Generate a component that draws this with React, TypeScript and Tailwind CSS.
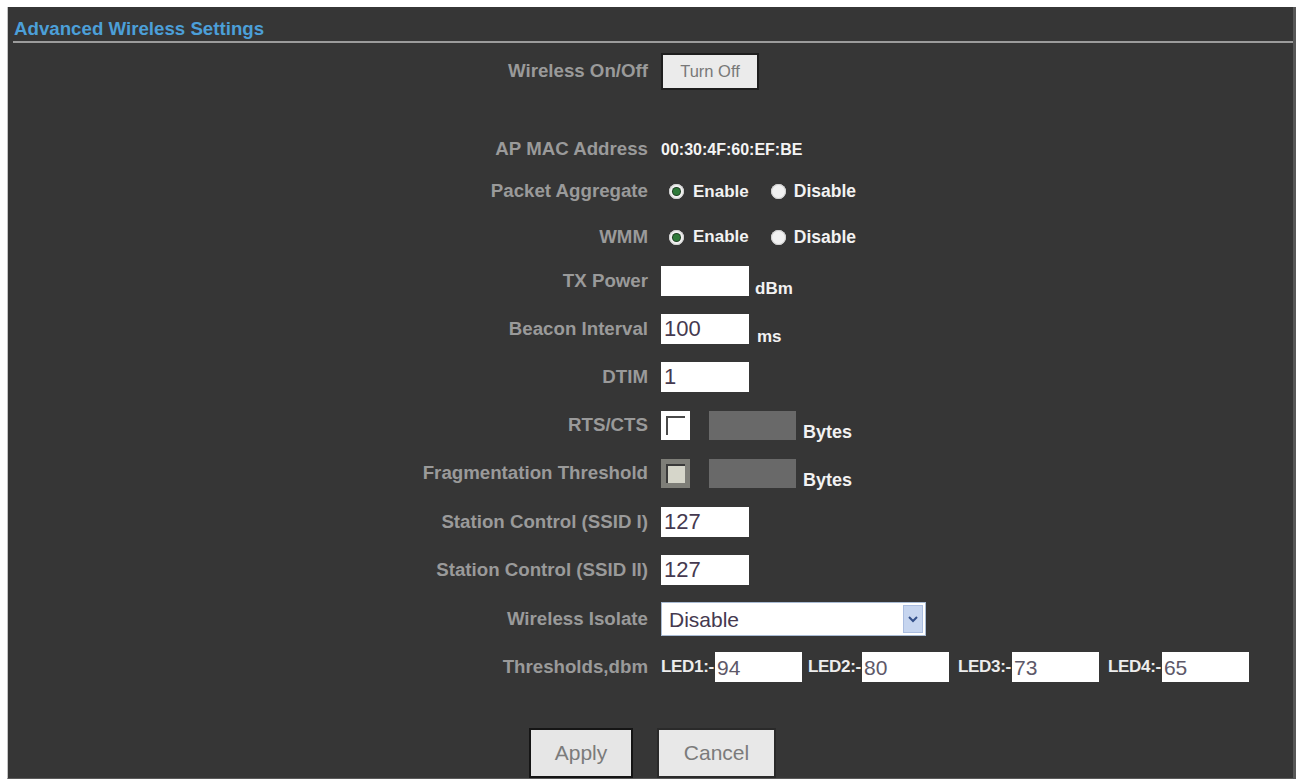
import React from "react";

const font = "font-['Liberation_Sans',Arial,sans-serif]";

function Row({
  label,
  mt,
  h,
  children,
}: {
  label: string;
  mt: string;
  h: string;
  children: React.ReactNode;
}) {
  return (
    <div className={`flex items-center ${mt} ${h}`}>
      <div className="w-[640px] shrink-0 text-right text-[18.7px] font-bold text-[#9a9a9a] leading-none">
        {label}
      </div>
      <div className="ml-[13px] flex items-center h-full">{children}</div>
    </div>
  );
}

function Radio({ checked }: { checked?: boolean }) {
  return (
    <span className="flex h-[15px] w-[15px] items-center justify-center rounded-full bg-[#f1f1f1] shadow-[inset_0_0_0_1px_#cfcfcf]">
      {checked && (
        <span className="h-[7px] w-[7px] rounded-full bg-[#2f7a3a] shadow-[0_0_0_1px_#1d3f22]" />
      )}
    </span>
  );
}

function RadioPair() {
  return (
    <div className="flex items-center text-[17px] font-bold text-[#f2f2f2]">
      <span className="ml-[8px]">
        <Radio checked />
      </span>
      <span className="ml-[9px]">Enable</span>
      <span className="ml-[22px]">
        <Radio />
      </span>
      <span className="ml-[8px] text-[17.5px]">Disable</span>
    </div>
  );
}

function TextBox({ value }: { value?: string }) {
  return (
    <div className="w-[88px] h-[30px] bg-white pl-[3px] flex items-center text-[22px] text-[#45394f] leading-none">
      {value}
    </div>
  );
}

function CheckRow({ grey }: { grey?: boolean }) {
  return (
    <div className="flex items-center h-full">
      {grey ? (
        <div className="h-[29px] w-[29px] bg-[#7e7e78] p-[5px] flex">
          <div className="flex-1 border-t-2 border-l-2 border-[#3a3a3a] bg-[#d6d6ca]" />
        </div>
      ) : (
        <div className="h-[29px] w-[29px] bg-white p-[5px] flex">
          <div className="flex-1 border-t-2 border-l-2 border-[#4a4a4a] bg-white" />
        </div>
      )}
      <div className="ml-[19px] h-[29px] w-[87px] bg-[#696969]" />
      <span className="ml-[7px] self-end mb-[-6px] text-[18px] font-bold text-[#f2f2f2]">
        Bytes
      </span>
    </div>
  );
}

function Led({ n, v, ml }: { n: string; v: string; ml: string }) {
  return (
    <div className={`flex items-center ${ml}`}>
      <span className="text-[17px] font-bold text-[#ededed] tracking-[-0.3px]">
        {n}
      </span>
      <div className="ml-[1px] h-[30px] w-[87px] bg-white pl-[2px] flex items-center text-[21px] text-[#5d5868] leading-none">
        {v}
      </div>
    </div>
  );
}

export default function App() {
  return (
    <div className={`${font} bg-white w-[1298px] h-[784px] pt-[7px] pl-[7px]`}>
      <div className="w-[1289px] h-[772px] bg-[#363636] border-l border-[#c4c4c4] border-r-[3px] border-r-[#575757] border-b border-b-[#5a5a5a] flex flex-col">
        <div className="h-[34px] pt-[10px] pl-[6px]">
          <div className="text-[18.7px] leading-[24px] font-bold text-[#4c9fd8]">
            Advanced Wireless Settings
          </div>
        </div>
        <div className="ml-[5px] h-[2px] bg-[#9c9c9c]" />

        <Row label="Wireless On/Off" mt="mt-[10px]" h="h-[37px]">
          <button className="h-[37px] w-[98px] bg-[#ebebeb] border-2 border-[#1e1e1e] text-[16.5px] text-[#787878]">
            Turn Off
          </button>
        </Row>

        <Row label="AP MAC Address" mt="mt-[45px]" h="h-[30px]">
          <span className="text-[16px] font-bold text-[#f4f4f4]">
            00:30:4F:60:EF:BE
          </span>
        </Row>

        <Row label="Packet Aggregate" mt="mt-[12px]" h="h-[30px]">
          <RadioPair />
        </Row>

        <Row label="WMM" mt="mt-[16px]" h="h-[30px]">
          <RadioPair />
        </Row>

        <Row label="TX Power" mt="mt-[14px]" h="h-[30px]">
          <TextBox />
          <span className="ml-[6px] self-end mb-[-5px] text-[17px] font-bold text-[#f2f2f2]">
            dBm
          </span>
        </Row>

        <Row label="Beacon Interval" mt="mt-[18px]" h="h-[30px]">
          <TextBox value="100" />
          <span className="ml-[8px] self-end mb-[-5px] text-[17px] font-bold text-[#f2f2f2]">
            ms
          </span>
        </Row>

        <Row label="DTIM" mt="mt-[18px]" h="h-[30px]">
          <TextBox value="1" />
        </Row>

        <Row label="RTS/CTS" mt="mt-[19px]" h="h-[29px]">
          <CheckRow />
        </Row>

        <Row label="Fragmentation Threshold" mt="mt-[19px]" h="h-[29px]">
          <CheckRow grey />
        </Row>

        <Row label="Station Control (SSID I)" mt="mt-[19px]" h="h-[30px]">
          <TextBox value="127" />
        </Row>

        <Row label="Station Control (SSID II)" mt="mt-[18px]" h="h-[30px]">
          <TextBox value="127" />
        </Row>

        <Row label="Wireless Isolate" mt="mt-[17px]" h="h-[34px]">
          <div className="h-[34px] w-[265px] bg-white border border-[#a9bbd3] flex items-center">
            <span className="flex-1 pl-[7px] text-[21px] text-[#45394f] leading-none">
              Disable
            </span>
            <span className="mr-[2px] h-[28px] w-[20px] bg-[#c6d5ef] border border-[#aabde0] flex items-center justify-center">
              <svg width="10" height="8" viewBox="0 0 10 8">
                <path
                  d="M1 2l4 4 4-4"
                  fill="none"
                  stroke="#34508a"
                  strokeWidth="2"
                />
              </svg>
            </span>
          </div>
        </Row>

        <Row label="Thresholds,dbm" mt="mt-[16px]" h="h-[30px]">
          <Led n="LED1:-" v="94" ml="ml-0" />
          <Led n="LED2:-" v="80" ml="ml-[6px]" />
          <Led n="LED3:-" v="73" ml="ml-[9px]" />
          <Led n="LED4:-" v="65" ml="ml-[9px]" />
        </Row>

        <div className="mt-[46px] flex justify-center gap-6 pl-[4px]">
          <button className="h-[50px] w-[104px] bg-[#e6e6e6] border-2 border-[#151515] text-[21px] text-[#7b7b7b]">
            Apply
          </button>
          <button className="h-[50px] w-[119px] bg-[#e8e8e8] border-2 border-[#2a2a2a] text-[21px] text-[#7b7b7b]">
            Cancel
          </button>
        </div>
      </div>
    </div>
  );
}
